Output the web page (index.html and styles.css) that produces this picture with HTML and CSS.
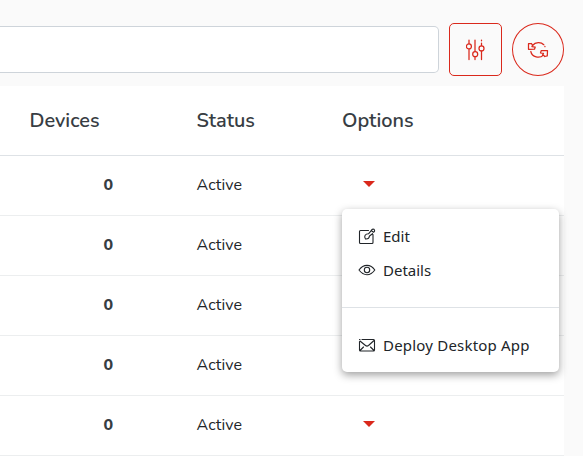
FILE: index.html
```
<!DOCTYPE html>
<html lang="en">
<head>
<meta charset="utf-8">
<title>Devices</title>
<link rel="stylesheet" href="styles.css">
</head>
<body>
<header class="toolbar">
  <input class="search" type="text" aria-label="Search">
  <button class="tool-button" aria-label="Filters">
    <svg class="filter-icon" width="20" height="22" viewBox="0 0 20 22">
      <path d="M3 1v3.500M3 10.200V20.500M9 1v11.200M9 18v2.500M15.500 1v.8M15.500 4v2.500M15.500 12.200V20.500"/>
      <circle cx="2.900" cy="7.400" r="2.500"/><circle cx="9.200" cy="15.200" r="2.500"/><circle cx="15.500" cy="9.400" r="2.500"/>
    </svg>
  </button>
  <button class="tool-button round" aria-label="Refresh">
    <svg class="refresh-icon" width="22" height="20" viewBox="0 0 22 20">
      <path d="M5.500 5.500C8.500 1.800 14 1.800 16.800 4.700M17.900 6.400l.1.300M3.800 11.500c1.200 5.800 8.800 7.200 12.700 3.600M16.500 15.100l1.200 1.400 2.600-.7.200-5.300-6.300.2-.7 2.300 3 .4-1 1.700M5.500 5.500L4.500 3.500 1.500 3.700v5.600l6-.1.700-2.100-3.300-.4z"/>
    </svg>
  </button>
</header>
<main class="table-card">
  <div class="row head"><div class="devices">Devices</div><div class="status">Status</div><div class="options">Options</div></div>
  <div class="row"><div class="devices">0</div><div class="status">Active</div>
    <div class="options"><i class="caret"></i>
      <div class="menu">
        <a class="item"><svg width="18" height="18" viewBox="0 0 18 18"><path d="M10.500 3.500H2.500q-1 0-1 1v11q0 1 1 1h11.500q1 0 1-1V7.500M7.500 12c-2-3 0-5.200 3-5.200l2.500-3M7.500 12c2.700.2 3.800-1.200 4-3l3-2.300M13.200 3.500q1-2 2.800-1.200 1.500 1.500-.5 3z"/></svg><span>Edit</span></a>
        <a class="item"><svg width="18" height="18" viewBox="0 0 18 18"><path d="M1 9Q4.300 4.400 9 4.400T16.800 9Q13.500 13.700 9 13.700T1 9z"/><circle cx="9" cy="9" r="2.700"/></svg><span>Details</span></a>
        <div class="divider"></div>
        <a class="item"><svg width="18" height="18" viewBox="0 0 18 18"><path d="M4 3.500h11.500q1 0 1 1v9.500q0 1-1 1h-13q-1 0-1-1V5.500M1.500 3.500h.5M2 5L7.500 9.500q1.500 1.200 3 0L16 4.500M2 14.500l3.500-3.500M16 14.500l-3.500-3.500"/></svg><span class="deploy">Deploy Desktop App</span></a>
      </div>
    </div>
  </div>
  <div class="row"><div class="devices">0</div><div class="status">Active</div><div class="options"><i class="caret"></i></div></div>
  <div class="row"><div class="devices">0</div><div class="status">Active</div><div class="options"><i class="caret"></i></div></div>
  <div class="row"><div class="devices">0</div><div class="status">Active</div><div class="options"><i class="caret"></i></div></div>
  <div class="row"><div class="devices">0</div><div class="status">Active</div><div class="options"><i class="caret"></i></div></div>
</main>
</body>
</html>
```
FILE: styles.css
```
* { box-sizing: border-box; }
body {
  margin: 0;
  height: 456px;
  overflow: hidden;
  background: #fafafa;
  color: #212529;
  font-family: Nunito, Lato, sans-serif;
}
.toolbar {
  display: flex;
  align-items: center;
  width: 564px;
  height: 86px;
  padding-top: 13px;
}
.search {
  width: 439px;
  height: 47px;
  margin: 0 10px 0 0;
  border: 1px solid #ced4da;
  border-left: 0;
  border-radius: 0 5px 5px 0;
  background: #fff;
}
.tool-button {
  display: flex;
  align-items: center;
  justify-content: center;
  width: 53px;
  height: 53px;
  margin: 0 10px 0 0;
  padding: 0;
  border: 1px solid #da291c;
  border-radius: 5px;
  background: transparent;
  flex: none;
}
.tool-button.round { width: 52px; margin: 0; border-radius: 50%; }
svg { fill: none; stroke-linecap: round; stroke-linejoin: round; flex: none; }
.filter-icon, .refresh-icon { stroke: #da291c; stroke-width: 1.25; }
.table-card { width: 564px; background: #fff; }
.row {
  display: grid;
  grid-template-columns: 196.500px 145.500px 222px;
  align-items: center;
  height: 60px;
  padding-bottom: 2px;
  border-bottom: 1px solid #eceeef;
  font-size: 16px;
}
.row.head {
  height: 70px;
  padding-bottom: 0;
  border-color: #dee2e6;
  color: #373d43;
  font-size: 19.900px;
}
.devices { padding-left: 103.500px; font-weight: 800; color: #373d43; }
.head .devices { padding-left: 29.500px; }
.head > div { font-weight: 600; }
.status { letter-spacing: .1px; }
.head .status { letter-spacing: 0; }
.options { position: relative; }
.caret {
  display: block;
  width: 12px;
  margin-bottom: 2px;
  margin-left: 21px;
  border: 6px solid transparent;
  border-top-color: #da291c;
  border-bottom: 0;
}
.menu {
  position: absolute;
  z-index: 2;
  top: 28px;
  left: 0;
  width: 217px;
  height: 163px;
  padding-top: 10px;
  border-radius: 5px;
  background: #fff;
  box-shadow: 0 3px 8px rgba(0, 0, 0, .38);
  font-family: "Segoe UI", "Noto Sans", sans-serif;
  font-size: 15px;
}
.item {
  display: flex;
  align-items: center;
  gap: 7px;
  height: 34px;
  padding-left: 16px;
  white-space: nowrap;
}
.item svg { stroke: #212529; stroke-width: 1.1; }
.deploy { letter-spacing: .2px; }
.divider { height: 1px; margin: 20px 0; background: #dee2e6; }
```
